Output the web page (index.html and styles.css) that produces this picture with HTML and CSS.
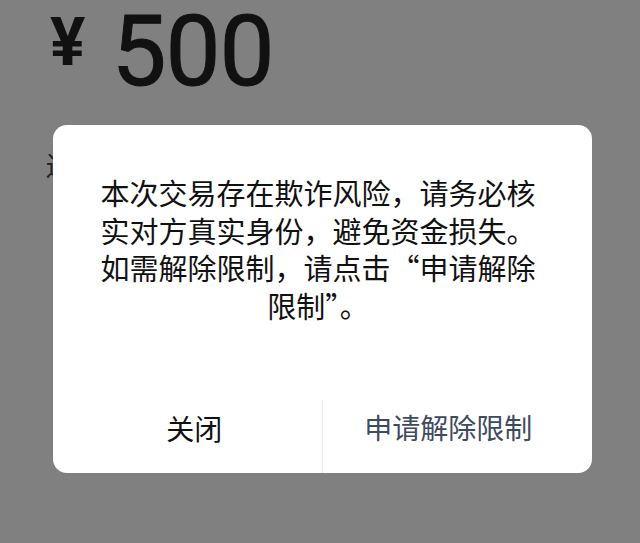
FILE: index.html
```html
<!DOCTYPE html>
<html lang="zh-CN">
<head>
<meta charset="utf-8">
<link rel="stylesheet" href="styles.css">
</head>
<body>
<div class="page">
  <div class="amount">
    <span class="yen">¥</span>
    <span class="num">500</span>
  </div>
  <div class="hint">还</div>
  <div class="dialog">
    <div class="msg">本次交易存在欺诈风险，请务必核实对方真实身份，避免资金损失。如需解除限制，请点击“申请解除限制”。</div>
    <div class="actions">
      <div class="btn close">关闭</div>
      <div class="btn apply">申请解除限制</div>
    </div>
  </div>
</div>
</body>
</html>
```
FILE: styles.css
```css
html, body {
  margin: 0;
  padding: 0;
  background: #808080;
}
body {
  width: 640px;
  height: 543px;
  overflow: hidden;
  font-family: "Noto Sans CJK SC", "Noto Sans", sans-serif;
}
.page {
  position: relative;
  width: 640px;
  height: 543px;
}
.amount {
  display: flex;
  align-items: flex-start;
  padding: 0 0 0 50px;
  height: 110px;
  color: #111;
}
.yen {
  font-family: Roboto, "Noto Sans", sans-serif;
  font-weight: 700;
  font-size: 66px;
  line-height: 80px;
  margin-top: 3px;
}
.num {
  font-family: Roboto, "Noto Sans", sans-serif;
  font-weight: 400;
  font-size: 98px;
  line-height: 104px;
  letter-spacing: -1px;
  margin-left: 26px;
  -webkit-text-stroke: 1px #111;
}
.hint {
  position: absolute;
  left: 46px;
  top: 146px;
  font-size: 26px;
  color: #222;
}
.dialog {
  position: absolute;
  left: 53px;
  top: 125px;
  width: 539px;
  height: 348px;
  background: #fff;
  border-radius: 14px;
  display: flex;
  flex-direction: column;
}
.msg {
  margin: 49px 0 0 40px;
  width: 450px;
  text-align: center;
  font-size: 29px;
  line-height: 37.5px;
  color: #111;
  height: 226px;
}
.actions {
  flex: 1;
  display: flex;
}
.btn {
  flex: 0 0 50%;
  box-sizing: border-box;
  display: flex;
  align-items: center;
  justify-content: center;
  font-size: 28px;
  padding-bottom: 20px;
}
.close {
  color: #111;
  border-right: 1px solid #e6e6e6;
  padding-left: 14px;
  padding-top: 2px;
}
.apply {
  color: #3e4a5e;
  padding-right: 18px;
}
```
